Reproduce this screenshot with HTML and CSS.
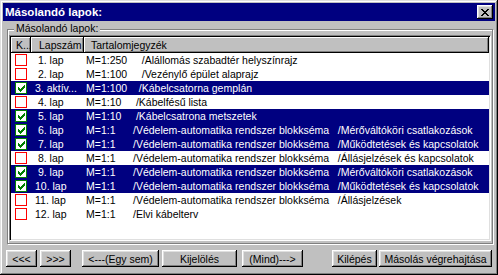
FILE: index.html
```html
<!DOCTYPE html>
<html lang="hu">
<head>
    <meta charset="UTF-8">
    <title>Másolandó lapok</title>
    <link rel="stylesheet" href="styles.css">
</head>
<body>
    <div class="window">
        <div class="titlebar">
            <span class="title">Másolandó lapok:</span>
            <button class="close-btn">
                <svg width="8" height="7" viewBox="0 0 8 7" shape-rendering="crispEdges"><path d="M0 0h2v1H0zM6 0h2v1H6zM1 1h2v1H1zM5 1h2v1H5zM2 2h4v1H2zM3 3h2v1H3zM2 4h4v1H2zM1 5h2v1H1zM5 5h2v1H5zM0 6h2v1H0zM6 6h2v1H6z" fill="#000"/></svg>
            </button>
        </div>

        <div class="group">
            <span class="group-label">Másolandó lapok:</span>
            <div class="listbox">
                <div class="list-header">
                    <div class="hcell h-check">K...</div>
                    <div class="hcell h-lap">Lapszám</div>
                    <div class="hcell h-toc">Tartalomjegyzék</div>
                </div>
                <div class="row"><span class="cell-check"><span class="check"></span></span><span class="lap"> 1. lap</span><span class="toc">M=1:250     /Alállomás szabadtér helyszínrajz</span></div>
                <div class="row"><span class="cell-check"><span class="check"></span></span><span class="lap"> 2. lap</span><span class="toc">M=1:100     /Vezénylő épület alaprajz</span></div>
                <div class="row sel"><span class="cell-check"><span class="check on"><svg class="tick" viewBox="0 0 7 7"><path d="M6 0h1v1H6zM5 1h2v1H5zM0 2h1v1H0zM4 2h3v1H4zM0 3h2v1H0zM3 3h3v1H3zM0 4h5v1H0zM1 5h3v1H1zM2 6h1v1H2z"/></svg></span></span><span class="lap">3. aktív...</span><span class="toc">M=1:100    /Kábelcsatorna gemplán</span></div>
                <div class="row"><span class="cell-check"><span class="check"></span></span><span class="lap"> 4. lap</span><span class="toc">M=1:10     /Kábelfésű lista</span></div>
                <div class="row sel"><span class="cell-check"><span class="check on"><svg class="tick" viewBox="0 0 7 7"><path d="M6 0h1v1H6zM5 1h2v1H5zM0 2h1v1H0zM4 2h3v1H4zM0 3h2v1H0zM3 3h3v1H3zM0 4h5v1H0zM1 5h3v1H1zM2 6h1v1H2z"/></svg></span></span><span class="lap"> 5. lap</span><span class="toc">M=1:10     /Kábelcsatrona metszetek</span></div>
                <div class="row sel"><span class="cell-check"><span class="check on"><svg class="tick" viewBox="0 0 7 7"><path d="M6 0h1v1H6zM5 1h2v1H5zM0 2h1v1H0zM4 2h3v1H4zM0 3h2v1H0zM3 3h3v1H3zM0 4h5v1H0zM1 5h3v1H1zM2 6h1v1H2z"/></svg></span></span><span class="lap"> 6. lap</span><span class="toc">M=1:1      /Védelem-automatika rendszer blokkséma   /Mérőváltóköri csatlakozások</span></div>
                <div class="row sel"><span class="cell-check"><span class="check on"><svg class="tick" viewBox="0 0 7 7"><path d="M6 0h1v1H6zM5 1h2v1H5zM0 2h1v1H0zM4 2h3v1H4zM0 3h2v1H0zM3 3h3v1H3zM0 4h5v1H0zM1 5h3v1H1zM2 6h1v1H2z"/></svg></span></span><span class="lap"> 7. lap</span><span class="toc">M=1:1      /Védelem-automatika rendszer blokkséma   /Működtetések és kapcsolatok</span></div>
                <div class="row"><span class="cell-check"><span class="check"></span></span><span class="lap"> 8. lap</span><span class="toc">M=1:1      /Védelem-automatika rendszer blokkséma   /Állásjelzések és kapcsolatok</span></div>
                <div class="row sel"><span class="cell-check"><span class="check on"><svg class="tick" viewBox="0 0 7 7"><path d="M6 0h1v1H6zM5 1h2v1H5zM0 2h1v1H0zM4 2h3v1H4zM0 3h2v1H0zM3 3h3v1H3zM0 4h5v1H0zM1 5h3v1H1zM2 6h1v1H2z"/></svg></span></span><span class="lap"> 9. lap</span><span class="toc">M=1:1      /Védelem-automatika rendszer blokkséma   /Mérőváltóköri csatlakozások</span></div>
                <div class="row sel"><span class="cell-check"><span class="check on"><svg class="tick" viewBox="0 0 7 7"><path d="M6 0h1v1H6zM5 1h2v1H5zM0 2h1v1H0zM4 2h3v1H4zM0 3h2v1H0zM3 3h3v1H3zM0 4h5v1H0zM1 5h3v1H1zM2 6h1v1H2z"/></svg></span></span><span class="lap">10. lap</span><span class="toc">M=1:1      /Védelem-automatika rendszer blokkséma   /Működtetések és kapcsolatok</span></div>
                <div class="row"><span class="cell-check"><span class="check"></span></span><span class="lap">11. lap</span><span class="toc">M=1:1      /Védelem-automatika rendszer blokkséma   /Állásjelzések</span></div>
                <div class="row"><span class="cell-check"><span class="check"></span></span><span class="lap">12. lap</span><span class="toc">M=1:1      /Elvi kábelterv</span></div>
            </div>
        </div>

        <div class="buttons">
            <button class="btn btn-first">&lt;&lt;&lt;</button>
            <button class="btn btn-last">&gt;&gt;&gt;</button>
            <button class="btn btn-none">&lt;---(Egy sem)</button>
            <button class="btn btn-mark">Kijelölés</button>
            <button class="btn btn-all">(Mind)---&gt;</button>
            <button class="btn btn-exit">Kilépés</button>
            <button class="btn btn-copy">Másolás végrehajtása</button>
        </div>
    </div>
</body>
</html>
```

FILE: styles.css
```css
body {
    margin: 0;
    font-family: "Liberation Sans", Arial, sans-serif;
    font-size: 10.5px;
    color: #000;
}
.window {
    width: 498px;
    height: 275px;
    box-sizing: border-box;
    padding: 3px;
    background: #c0c0c0;
    box-shadow: inset -1px -1px #000, inset 1px 1px #dfdfdf, inset -2px -2px #808080, inset 2px 2px #fff;
}
.titlebar {
    height: 18px;
    background: #000080;
    display: flex;
    align-items: center;
    justify-content: space-between;
    padding: 0 2px;
}
.title {
    color: #fff;
    font-weight: bold;
    font-size: 11.5px;
}
.close-btn {
    width: 16px;
    height: 14px;
    padding: 0;
    border: none;
    background: #c0c0c0;
    box-shadow: inset -1px -1px #000, inset 1px 1px #fff, inset -2px -2px #808080, inset 2px 2px #dfdfdf;
    display: flex;
    align-items: center;
    justify-content: center;
}
.close-btn svg {
    display: block;
    margin-left: -1px;
}
.group {
    position: relative;
    margin: 8px 2px 0 4px;
    height: 215px;
    box-sizing: border-box;
    border: 1px solid #808080;
    box-shadow: inset 1px 1px #fff, 1px 1px #fff;
    padding: 5px 1px 2px 1px;
}
.group-label {
    position: absolute;
    top: -8px;
    left: 6px;
    padding: 0 2px;
    background: #c0c0c0;
    line-height: 13px;
}
.listbox {
    height: 100%;
    box-sizing: border-box;
    border: 1px solid;
    border-color: #808080 #fff #fff #808080;
    box-shadow: inset 1px 1px #000, inset -1px -1px #dfdfdf;
    padding: 1px;
    background: #fff;
}
.list-header,
.row {
    display: grid;
    grid-template-columns: 20px 53px 1fr;
}
.hcell {
    height: 16px;
    line-height: 16px;
    background: #c0c0c0;
    box-shadow: inset -1px -1px #000, inset 1px 1px #fff, inset -2px -2px #808080;
    white-space: nowrap;
    overflow: hidden;
}
.h-check {
    padding-left: 5px;
}
.h-lap {
    padding-left: 8px;
}
.h-toc {
    padding-left: 7px;
}
.row {
    height: 14px;
    line-height: 14px;
}
.row.sel {
    background: #000080;
    color: #fff;
}
.cell-check {
    padding: 1px 0 0 4px;
}
.check {
    display: flex;
    align-items: center;
    justify-content: center;
    width: 12px;
    height: 12px;
    box-sizing: border-box;
    border: 1px solid #f00;
    background: #fff;
}
.check.on {
    border-color: #008000;
}
.tick {
    display: block;
    width: 7px;
    height: 7px;
    fill: #008000;
    shape-rendering: crispEdges;
}
.lap {
    padding-left: 4px;
    white-space: pre;
    overflow: hidden;
}
.toc {
    padding-left: 2px;
    white-space: pre;
    overflow: hidden;
}
.buttons {
    display: flex;
    margin: 6px 3px 0 3px;
}
.btn {
    height: 17px;
    padding: 0;
    border: none;
    background: #c0c0c0;
    font: inherit;
    color: #000;
    text-align: center;
    white-space: nowrap;
    box-shadow: inset -1px -1px #000, inset 1px 1px #fff, inset -2px -2px #808080, inset 2px 2px #dfdfdf;
}
.btn-first {
    width: 31px;
}
.btn-last {
    width: 31px;
    margin-left: 3px;
}
.btn-none {
    width: 77px;
    margin-left: 11px;
}
.btn-mark {
    width: 75px;
    margin-left: 3px;
}
.btn-all {
    width: 61px;
    margin-left: 5px;
}
.btn-exit {
    width: 45px;
    margin-left: auto;
}
.btn-copy {
    width: 113px;
    margin-left: 2px;
}
```
